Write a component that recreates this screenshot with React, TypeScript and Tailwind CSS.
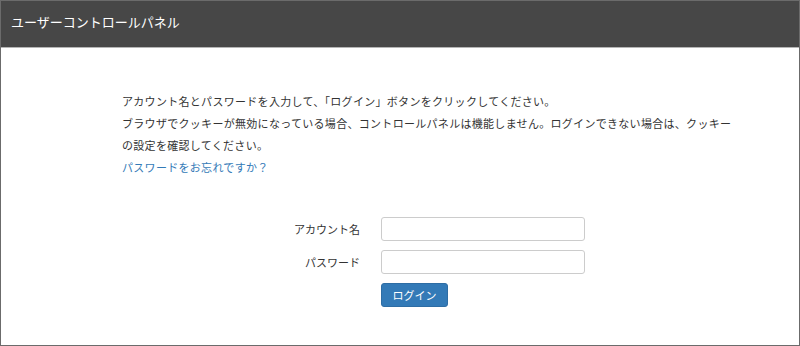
export default function App() {
  return (
    <div
      className="w-[800px] h-[346px] border border-[#6b6b6b] bg-white flex flex-col overflow-hidden"
      style={{ fontFamily: '"Noto Sans CJK JP", "Noto Sans", sans-serif' }}
    >
      {/* header */}
      <div className="h-[47px] shrink-0 bg-[#474747] border-b border-[#b5b5b5] flex items-center pl-[10px] pb-[6px]">
        <h1 className="text-[13px] text-white leading-none">ユーザーコントロールパネル</h1>
      </div>

      {/* body */}
      <div className="pl-[121px] pt-[42px] text-[#333] text-[11px]">
        <div className="w-[620px] leading-[22px] tracking-[0.3px]">
          <p>アカウント名とパスワードを入力して、「ログイン」ボタンをクリックしてください。</p>
          <p>
            ブラウザでクッキーが無効になっている場合、コントロールパネルは機能しません。ログインできない場合は、クッキーの設定を確認してください。
          </p>
          <a className="text-[#337ab7]">パスワードをお忘れですか？</a>
        </div>

        <form className="mt-[39px] flex flex-col gap-[9px]">
          <div className="flex items-center">
            <label className="w-[238px] text-right">アカウント名</label>
            <input
              type="text"
              className="ml-[21px] w-[204px] h-[24px] border border-[#ccc] rounded-[3px] bg-white"
            />
          </div>
          <div className="flex items-center">
            <label className="w-[238px] text-right">パスワード</label>
            <input
              type="password"
              className="ml-[21px] w-[204px] h-[24px] border border-[#ccc] rounded-[3px] bg-white"
            />
          </div>
          <div className="flex">
            <button
              type="button"
              className="ml-[259px] w-[67px] h-[24px] bg-[#337ab7] border border-[#2e6da4] rounded-[3px] text-white text-[11px]"
            >
              ログイン
            </button>
          </div>
        </form>
      </div>
    </div>
  );
}
